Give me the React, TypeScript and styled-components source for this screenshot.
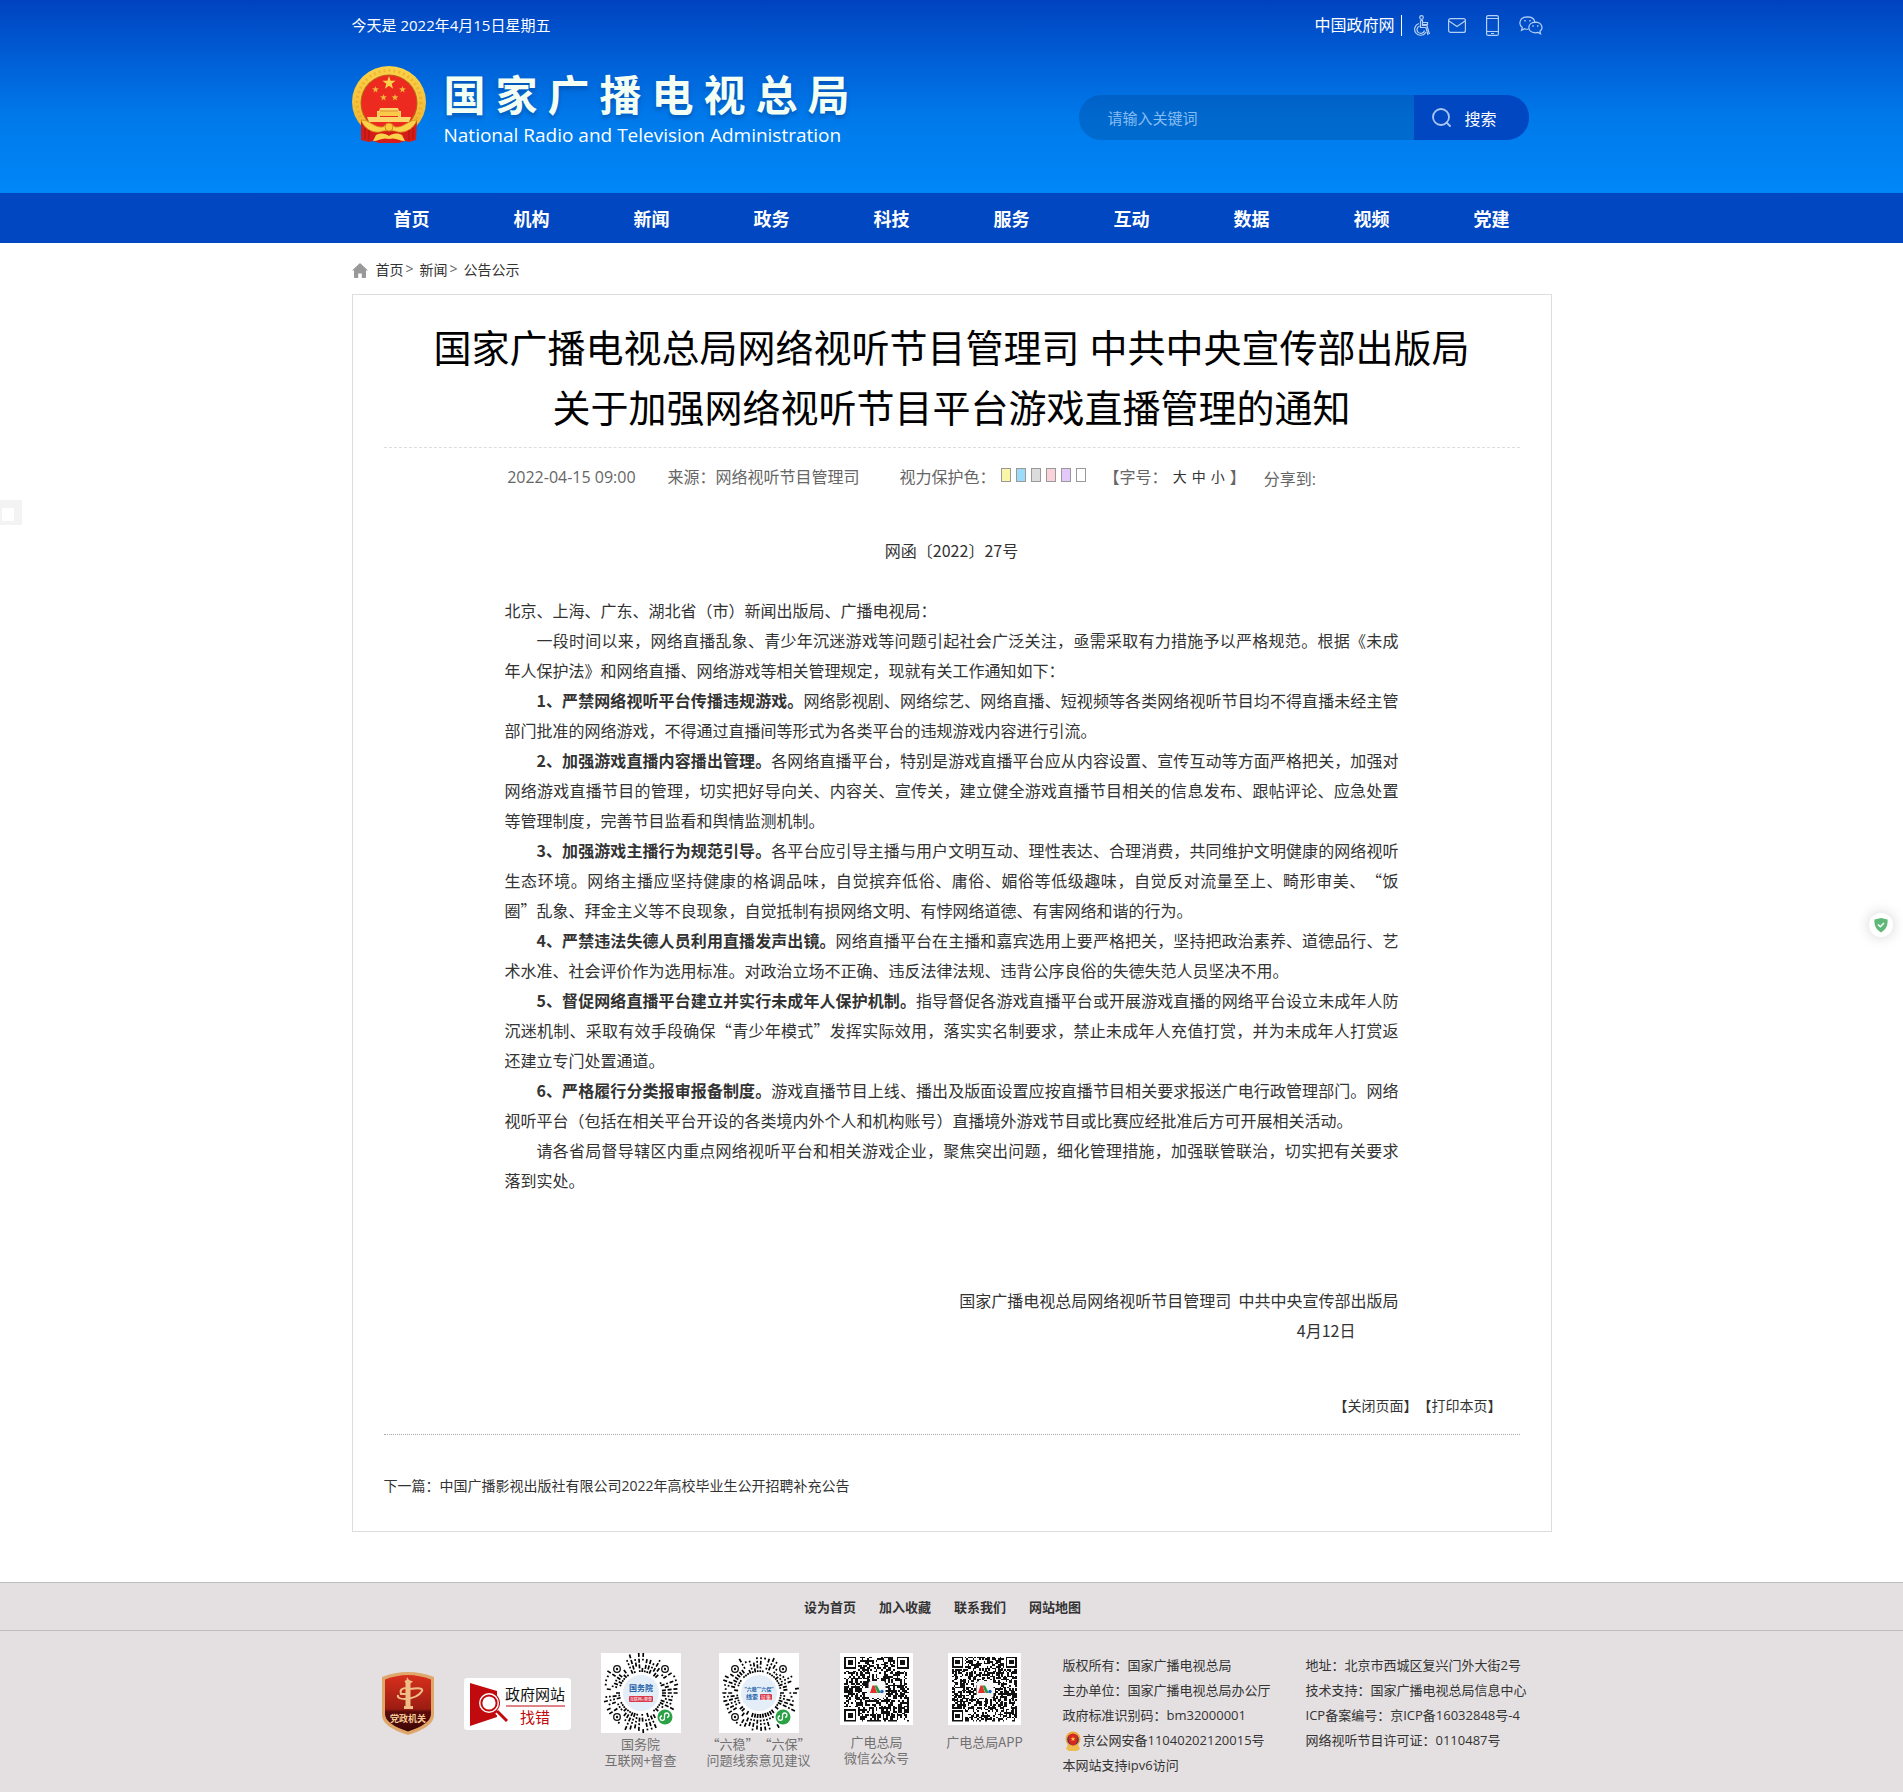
import React from "react";
import styled, { createGlobalStyle } from "styled-components";

const sans = `"Open Sans", "Noto Sans CJK SC", sans-serif`;
const cjk = `"Noto Sans CJK SC", "Open Sans", sans-serif`;

const GlobalStyle = createGlobalStyle`
  * { box-sizing: border-box; }
  body { margin: 0; background: #fff; color: #333; font-family: ${sans}; font-size: 14px; text-spacing-trim: space-all; }
  a { color: inherit; text-decoration: none; }
  p, h1, ul, dl { margin: 0; padding: 0; }
  button { border: 0; padding: 0; background: none; color: inherit; font: inherit; cursor: pointer; }
`;

const Container = styled.div`
  width: 100%;
  max-width: 1200px;
  margin: 0 auto;
`;

/* ---------- header ---------- */

const Header = styled.header`
  background: linear-gradient(#0042bf 0%, #005fd6 31%, #0079ea 60%, #0087f8 100%);
  color: #fff;
`;

const TopBar = styled(Container)`
  display: flex;
  justify-content: space-between;
  align-items: center;
  height: 52px;
  font-size: 15px;
`;

const Today = styled.span`
  padding-bottom: 4px;
`;

const TopLinks = styled.div`
  display: flex;
  align-items: center;
  padding: 0 9px 2px 0;
  color: #b5d0f4;
`;

const GovLink = styled.a`
  padding-right: 6px;
  border-right: 1px solid #fff;
  color: #fff;
  font-size: 16px;
  line-height: 21px;
`;

const IconLink = styled.a<{ $gap: number }>`
  display: flex;
  margin-left: ${(p) => p.$gap}px;
`;

const Masthead = styled(Container)`
  display: flex;
  justify-content: space-between;
  align-items: flex-end;
  padding: 14px 23px 50px 0;
`;

const Brand = styled.a`
  display: flex;
  gap: 18px;
  height: 77px;
`;

const BrandNames = styled.div`
  width: 406px;
  padding-top: 2px;
`;

const BrandZh = styled.div`
  font-family: ${cjk};
  font-size: 42px;
  font-weight: 700;
  line-height: 50px;
  text-align: justify;
  text-align-last: justify;
  color: #f4fff4;
  text-shadow: 0 3px 4px rgba(0, 50, 120, 0.4);
`;

const BrandEn = styled.div`
  margin-top: 6px;
  font-family: "Open Sans", sans-serif;
  font-size: 19px;
  line-height: 22px;
  white-space: nowrap;
`;

const SearchForm = styled.form`
  display: flex;
  width: 450px;
  height: 45px;
  margin-bottom: 3px;
  border-radius: 22px;
  overflow: hidden;
`;

const SearchInput = styled.input`
  flex: 1;
  min-width: 0;
  padding: 0 29px;
  border: 0;
  outline: 0;
  background: rgba(0, 60, 130, 0.28);
  color: #fff;
  font: 15px ${sans};
  &::placeholder { color: #86bcf2; opacity: 1; }
`;

const SearchButton = styled.button`
  display: flex;
  align-items: center;
  gap: 14px;
  width: 115px;
  padding-left: 18px;
  background: #0047c1;
  font-size: 16px;
`;

const Nav = styled.nav`
  background: #0047c1;
`;

const NavList = styled(Container).attrs({ as: "ul" })`
  display: grid;
  grid-template-columns: repeat(10, 1fr);
  list-style: none;
  a {
    display: block;
    padding-top: 2px;
    color: #fff;
    font-size: 18px;
    font-weight: 700;
    line-height: 48px;
    text-align: center;
  }
`;

/* ---------- article ---------- */

const Breadcrumb = styled(Container).attrs({ as: "nav" })`
  display: flex;
  align-items: center;
  height: 51px;
  svg { margin: 3px 8px 0 0; }
  span { margin: 0 6px 0 2px; color: #666; }
`;

const Panel = styled(Container).attrs({ as: "main" })`
  padding: 22px 31px 30px;
  border: 1px solid #ddd;
`;

const Title = styled.h1`
  padding-bottom: 10px;
  border-bottom: 1px dashed #ddd;
  color: #000;
  font-size: 38px;
  font-weight: 400;
  line-height: 60px;
  text-align: center;
`;

const Meta = styled.div`
  display: flex;
  justify-content: center;
  align-items: center;
  height: 30px;
  margin-top: 14px;
  padding-right: 80px;
  color: #666;
  font-size: 16px;
  line-height: 30px;
  white-space: nowrap;
`;

const MetaItem = styled.span<{ $gap: number }>`
  display: flex;
  align-items: center;
  margin-left: ${(p) => p.$gap}px;
`;

const Swatches = styled.span`
  display: flex;
  gap: 5px;
  padding: 0 18px 4px 5px;
`;

const Swatch = styled.button<{ $color: string }>`
  width: 10px;
  height: 14px;
  border: 1px solid #999;
  background: ${(p) => p.$color};
`;

const Sizes = styled.span`
  display: flex;
  gap: 5px;
  padding: 0 5px;
  color: #333;
  font-size: 14px;
`;

const Share = styled(MetaItem)`
  padding-top: 4px;
`;

const Article = styled.article`
  margin-top: 43px;
  padding: 0 121px;
  font-family: ${cjk};
  font-size: 16px;
  line-height: 30px;
`;

const Centered = styled.p`
  margin-bottom: 30px;
  text-align: center;
`;

const Paragraph = styled.p`
  text-align: justify;
  text-indent: 32px;
`;

const Signature = styled.div`
  margin-top: 90px;
  text-align: right;
`;

const SignDate = styled.p`
  padding-right: 43px;
`;

const Actions = styled.div`
  display: flex;
  justify-content: flex-end;
  margin-top: 46px;
  padding: 0 18px 14px 0;
  border-bottom: 1px dotted #aaa;
  line-height: 29px;
`;

const NextPost = styled.p`
  margin-top: 36px;
  line-height: 30px;
`;

/* ---------- footer ---------- */

const Footer = styled.footer`
  margin-top: 50px;
  border-top: 1px solid #bebdbf;
  background: #e4e0e1;
`;

const FooterLinks = styled.nav`
  display: flex;
  justify-content: center;
  gap: 23px;
  padding: 1px 18px 0 0;
  border-bottom: 1px solid #bebdbf;
  font-size: 13px;
  font-weight: 700;
  line-height: 46px;
`;

const FooterBody = styled(Container)`
  display: flex;
  gap: 30px;
  padding: 22px 0 14px 30px;
`;

const FooterMark = styled.a<{ $top: number }>`
  flex: none;
  height: 64px;
  margin-top: ${(p) => p.$top}px;
`;

const CodeItem = styled.figure<{ $width: number }>`
  display: flex;
  flex-direction: column;
  align-items: center;
  flex: none;
  width: ${(p) => p.$width}px;
  margin: 0;
  svg { flex: none; }
`;

const Caption = styled.figcaption<{ $top: number }>`
  margin-top: ${(p) => p.$top}px;
  color: #717071;
  font-family: ${cjk};
  font-size: 13px;
  line-height: 16px;
  text-align: center;
  white-space: nowrap;
`;

const Info = styled.div`
  display: grid;
  grid-template-columns: 243px auto;
  padding-left: 10px;
  font-size: 13px;
  line-height: 25px;
  white-space: nowrap;
`;

const InfoLine = styled.p`
  display: flex;
  align-items: center;
  gap: 1px;
`;

const SideTab = styled.div`
  position: fixed;
  left: 0;
  top: 500px;
  width: 22px;
  height: 25px;
  border: solid #f3f3f3;
  border-width: 8px 8px 4px 2px;
  background: #fff;
`;

const ShieldBubble = styled.button`
  position: fixed;
  right: 10px;
  top: 913px;
  display: flex;
  justify-content: center;
  align-items: center;
  width: 24px;
  height: 24px;
  border-radius: 50%;
  background: #fff;
  box-shadow: 0 0 14px rgba(0, 0, 0, 0.18);
`;

/* ---------- drawings ---------- */

function starPoints(cx: number, cy: number, r: number) {
  return Array.from({ length: 10 }, (_, i) => {
    const a = (Math.PI / 5) * i - Math.PI / 2;
    const q = i % 2 ? r * 0.4 : r;
    return `${(cx + q * Math.cos(a)).toFixed(2)},${(cy + q * Math.sin(a)).toFixed(2)}`;
  }).join(" ");
}

function Emblem() {
  return (
    <svg width="74" height="77" viewBox="0 0 74 77" aria-hidden="true">
      <defs>
        <linearGradient id="gold" x1="0" y1="0" x2="0" y2="1">
          <stop offset="0" stopColor="#fbd34a" />
          <stop offset="1" stopColor="#f0b02c" />
        </linearGradient>
      </defs>
      <ellipse cx="37" cy="36" rx="37" ry="36" fill="url(#gold)" />
      <circle cx="37" cy="36.500" r="32" fill="none" stroke="#e39a20" strokeWidth="3" strokeDasharray="2 3" opacity=".45" />
      <path d="M9 54c5 6 11 9 20 9h16c9 0 15-3 20-9l-1 20-7 2-4-1-6 2H27l-6-2-4 1-8-2z" fill="#d61c18" />
      <circle cx="37" cy="37" r="28.500" fill="#b9641a" />
      <circle cx="37" cy="37" r="27.500" fill="#ec2a20" />
      <polygon points={starPoints(37, 17, 7)} fill="#fbd34a" />
      {[[23.5, 23.5], [50.5, 23.5], [31.5, 31.5], [43, 31.5]].map(([x, y]) => (
        <polygon key={x} points={starPoints(x, y, 3.6)} fill="#f0b83c" />
      ))}
      <path d="M28 42h18l1 3h2v6h-3v-2H28v2h-3v-6h2z" fill="#fbd56a" />
      <path d="M28 45h18" stroke="#d8861a" />
      <path d="M26 46h22v4H26z" fill="#f9c94a" />
      <path d="M15 51h44l-2 5H17z" fill="#fbd56a" />
      <path d="M17 56h40l-6 6H23z" fill="#ec2a20" />
      <path d="M9 54c9 0 13 8 22 7 2-3 10-3 12 0 9 1 13-7 22-7-3 8-10 13-19 12-4-2-14-2-18 0-9 1-16-4-19-12z" fill="#fbd34a" stroke="#d8861a" strokeWidth=".8" />
      <circle cx="37" cy="61" r="4" fill="#fbc93a" stroke="#d8861a" />
      <path d="M21 75l3-6c6-3 10-1 13 1 3-2 7-4 13-1l3 6c-6 0-9-4-16-2-7-2-10 2-16 2z" fill="#fbd34a" />
      <path d="M13 62v11M17 64v10M57 64v10M61 62v11" stroke="#a8120f" />
    </svg>
  );
}

const stroke = { fill: "none", stroke: "currentColor", strokeWidth: 1.2 } as const;

const WheelchairIcon = () => (
  <svg width="17" height="21" viewBox="0 0 17 21" {...stroke}>
    <circle cx="7.500" cy="2.500" r="1.800" />
    <path d="M6.500 5.500h2v5h4.500l2.200 8H16M8.500 7.500h5v2h-5M6.500 5.500v7h5.500l2 7.500" />
    <path d="M5 8.500a6 6 0 1 0 7 8.500M5.500 11a3.800 3.800 0 1 0 5 4.500" />
  </svg>
);
const MailIcon = () => (
  <svg width="18" height="15" viewBox="0 0 18 15" {...stroke}>
    <rect x=".6" y=".6" width="16.800" height="13.800" rx="2" />
    <path d="M1 3l8 5.500L17 3" />
  </svg>
);
const PhoneIcon = () => (
  <svg width="13" height="21" viewBox="0 0 13 21" {...stroke}>
    <rect x=".6" y=".6" width="11.800" height="19.800" rx="1.500" />
    <path d="M1 3.500h11M1 16.500h11M5 18.500h3" />
  </svg>
);
const WechatIcon = () => (
  <svg width="24" height="19" viewBox="0 0 24 19" {...stroke}>
    <path d="M9.500 13.200c-1.600.2-2.600 0-3.800-.5L2.500 14.300l.8-2.800C-.8 8.600.2 1 8.500.8c4 0 6.700 2 7.300 5" />
    <path d="M16.300 6.200c-8.600.4-8.600 10.300 0 10.600 1 0 1.800-.1 2.600-.4l2.700 1.400-.7-2.500c4-3 2-9-4.600-9.100z" />
    <path d="M5.300 4.800h1.400M10.300 4.800h1.400M13.300 10h1.400M18 10h1.400" strokeWidth="1.500" />
  </svg>
);
const SearchIcon = () => (
  <svg width="19" height="19" viewBox="0 0 19 19" fill="none" stroke="#a9c6f2" strokeWidth="1.800">
    <circle cx="9" cy="9" r="8" />
    <path d="M14.500 14.500L18 18" strokeLinecap="round" />
  </svg>
);
const HomeIcon = () => (
  <svg width="16" height="15" viewBox="0 0 16 15" fill="#999">
    <path d="M8 0l8 7.500h-2V14c0 .6-.4 1-1 1H9.800v-4.500H6.200V15H3c-.6 0-1-.4-1-1V7.500H0z" />
  </svg>
);

function PartyBadge() {
  return (
    <svg width="52" height="64" viewBox="0 0 52 64">
      <defs>
        <linearGradient id="badgeRed" x1="0" y1="0" x2="0" y2="1">
          <stop offset="0" stopColor="#d8301c" />
          <stop offset=".6" stopColor="#9c1c12" />
          <stop offset=".65" stopColor="#5c0c0a" />
          <stop offset="1" stopColor="#3c0606" />
        </linearGradient>
      </defs>
      <path d="M0 6Q26-4 52 6v38q0 12-26 20Q0 56 0 44z" fill="#dfa76a" />
      <path d="M3 8.500Q26-.5 49 8.500V43q0 10-23 17.500Q3 53 3 43z" fill="url(#badgeRed)" />
      <path d="M23.500 12l-1-2 2-1 .5-3 2 3 4 1.500-2.500 2V36h-5V17z" fill="#efbd86" />
      <path d="M25 17q-8 0-6 6h6M28 18q14-2 12 2-4 7-17 8-8 0-7-4" fill="none" stroke="#efbd86" strokeWidth="2" />
      <path d="M22 35h9v3h-9z" fill="#efbd86" />
      <text x="26" y="51" textAnchor="middle" fontFamily="Noto Sans CJK SC" fontWeight="700" fontSize="9" fill="#f3c995">党政机关</text>
    </svg>
  );
}

function ErrorReport() {
  return (
    <svg width="107" height="52" viewBox="0 0 107 52">
      <rect width="107" height="52" rx="3" fill="#fff" />
      <path d="M6 5l27 8v26L6 48z" fill="#c00a0e" />
      <circle cx="25" cy="25" r="11" fill="#c00a0e" />
      <circle cx="25" cy="25" r="8.500" fill="#fff" stroke="#fff" strokeWidth="3" />
      <circle cx="25" cy="25" r="7.600" fill="#fff" stroke="#c00a0e" strokeWidth="2" />
      <path d="M33 34l9 9" stroke="#fff" strokeWidth="5" />
      <path d="M33 33l10 10" stroke="#c00a0e" strokeWidth="3" />
      <path d="M42 28h59" stroke="#c00a0e" />
      <text x="41" y="22" fontFamily="Noto Sans CJK SC" fontSize="15" fill="#111">政府网站</text>
      <text x="56" y="45" fontFamily="Noto Sans CJK SC" fontSize="15" fill="#c00a0e">找错</text>
    </svg>
  );
}

function makeRandom(seed: number) {
  let s = seed;
  return () => {
    s = (s * 1103515245 + 12345) % 2147483648;
    return s / 2147483648;
  };
}

/* Round mini-program code: rays of short dashes about a central disc. */
function RoundCode({ seed, children }: { seed: number; children: React.ReactNode }) {
  const rnd = makeRandom(seed);
  const eyes = [[16, 16], [64, 16], [16, 64]];
  let d = "";
  for (let k = 0; k < 54; k++) {
    const a = (k * Math.PI) / 27;
    for (let r = 21; r < 37; ) {
      const len = rnd() > 0.5 ? 4 : 1.8;
      const x = 40 + (r + len / 2) * Math.cos(a);
      const y = 40 + (r + len / 2) * Math.sin(a);
      const blocked = eyes.some(([ex, ey]) => Math.hypot(x - ex, y - ey) < 6) || Math.hypot(x - 64, y - 64) < 10;
      if (!blocked && rnd() > 0.18) {
        d += `M${(40 + r * Math.cos(a)).toFixed(1)} ${(40 + r * Math.sin(a)).toFixed(1)}L${(40 + (r + len) * Math.cos(a)).toFixed(1)} ${(40 + (r + len) * Math.sin(a)).toFixed(1)}`;
      }
      r += len + 1.8;
    }
  }
  return (
    <svg width="80" height="80" viewBox="0 0 80 80">
      <rect width="80" height="80" fill="#fff" />
      <path d={d} stroke="#000" strokeWidth="1.700" />
      {eyes.map(([x, y]) => (
        <g key={`${x}-${y}`}>
          <circle cx={x} cy={y} r="3.300" fill="#fff" stroke="#111" strokeWidth="1.300" />
          <circle cx={x} cy={y} r="1.200" fill="#111" />
        </g>
      ))}
      <circle cx="40" cy="40" r="18" fill="#e3eef8" />
      {children}
      <circle cx="64" cy="64" r="7.500" fill="#2aa245" />
      <path d="M61 63a2.200 2.200 0 1 0 2.500 2.200v-3a2.200 2.200 0 1 1 2.500 2.200" fill="none" stroke="#fff" strokeWidth="1.300" />
    </svg>
  );
}

/* Square code on a white card with the broadcaster's mark in the middle. */
function SquareCode({ seed, modules, inset }: { seed: number; modules: number; inset: number }) {
  const rnd = makeRandom(seed);
  const n = modules;
  const size = 73 - inset * 2;
  let d = "";
  for (let y = 0; y < n; y++) {
    for (let x = 0; x < n; x++) {
      const on = rnd() > 0.48;
      const corner = (x < 8 && y < 8) || (x >= n - 8 && y < 8) || (x < 8 && y >= n - 8);
      if (on && !corner) d += `M${x} ${y}h1v1h-1z`;
    }
  }
  const eye = (x: number, y: number) => `M${x} ${y}h7v7h-7zM${x + 1} ${y + 1}v5h5v-5zM${x + 2} ${y + 2}h3v3h-3z`;
  d += eye(0, 0) + eye(n - 7, 0) + eye(0, n - 7);
  return (
    <svg width="73" height="72" viewBox="0 0 73 72">
      <rect width="73" height="72" fill="#fff" />
      <svg x={inset} y={inset - 0.5} width={size} height={size} viewBox={`0 0 ${n} ${n}`}>
        <path d={d} fill="#111" shapeRendering="crispEdges" />
      </svg>
      <rect x="28.500" y="28" width="17" height="17" rx="3" fill="#f6f6f6" />
      <path d="M30 40l2.500-7.500h2L37 40z" fill="#e0312c" />
      <path d="M34.500 32.500h2.500L41 40h-3.500z" fill="#2a9a48" />
      <circle cx="42" cy="38.500" r="1.700" fill="#1f62c8" />
    </svg>
  );
}

const PoliceBadge = () => (
  <svg width="19" height="20" viewBox="-1 0 19 20">
    <path d="M4 13h10l2 5-3 2H5l-3-2z" fill="#eebb50" />
    <circle cx="9" cy="8" r="7.500" fill="#f0a83a" />
    <circle cx="9" cy="8.500" r="5.800" fill="#27347c" />
    <path d="M9 2.500l4.500 2v5Q13 13 9 14.500 5 13 4.500 9.500v-5z" fill="#d9271e" />
    <polygon points={starPoints(9, 8, 2.6)} fill="#fbd34a" />
  </svg>
);

/* ---------- content ---------- */

const navItems = ["首页", "机构", "新闻", "政务", "科技", "服务", "互动", "数据", "视频", "党建"];

const swatches = [
  ["黄色", "#faf6a8"],
  ["蓝色", "#9cdcf8"],
  ["灰色", "#dcdcdc"],
  ["粉色", "#fad2da"],
  ["紫色", "#e4c8fa"],
  ["白色", "#ffffff"],
];

const paragraphs: [string, string][] = [
  ["", "一段时间以来，网络直播乱象、青少年沉迷游戏等问题引起社会广泛关注，亟需采取有力措施予以严格规范。根据《未成年人保护法》和网络直播、网络游戏等相关管理规定，现就有关工作通知如下："],
  ["1、严禁网络视听平台传播违规游戏。", "网络影视剧、网络综艺、网络直播、短视频等各类网络视听节目均不得直播未经主管部门批准的网络游戏，不得通过直播间等形式为各类平台的违规游戏内容进行引流。"],
  ["2、加强游戏直播内容播出管理。", "各网络直播平台，特别是游戏直播平台应从内容设置、宣传互动等方面严格把关，加强对网络游戏直播节目的管理，切实把好导向关、内容关、宣传关，建立健全游戏直播节目相关的信息发布、跟帖评论、应急处置等管理制度，完善节目监看和舆情监测机制。"],
  ["3、加强游戏主播行为规范引导。", "各平台应引导主播与用户文明互动、理性表达、合理消费，共同维护文明健康的网络视听生态环境。网络主播应坚持健康的格调品味，自觉摈弃低俗、庸俗、媚俗等低级趣味，自觉反对流量至上、畸形审美、“饭圈”乱象、拜金主义等不良现象，自觉抵制有损网络文明、有悖网络道德、有害网络和谐的行为。"],
  ["4、严禁违法失德人员利用直播发声出镜。", "网络直播平台在主播和嘉宾选用上要严格把关，坚持把政治素养、道德品行、艺术水准、社会评价作为选用标准。对政治立场不正确、违反法律法规、违背公序良俗的失德失范人员坚决不用。"],
  ["5、督促网络直播平台建立并实行未成年人保护机制。", "指导督促各游戏直播平台或开展游戏直播的网络平台设立未成年人防沉迷机制、采取有效手段确保“青少年模式”发挥实际效用，落实实名制要求，禁止未成年人充值打赏，并为未成年人打赏返还建立专门处置通道。"],
  ["6、严格履行分类报审报备制度。", "游戏直播节目上线、播出及版面设置应按直播节目相关要求报送广电行政管理部门。网络视听平台（包括在相关平台开设的各类境内外个人和机构账号）直播境外游戏节目或比赛应经批准后方可开展相关活动。"],
  ["", "请各省局督导辖区内重点网络视听平台和相关游戏企业，聚焦突出问题，细化管理措施，加强联管联治，切实把有关要求落到实处。"],
];

export default function App() {
  return (
    <>
      <GlobalStyle />
      <Header>
        <TopBar>
          <Today>今天是 2022年4月15日星期五</Today>
          <TopLinks>
            <GovLink href="#">中国政府网</GovLink>
            <IconLink $gap={12} href="#" aria-label="无障碍"><WheelchairIcon /></IconLink>
            <IconLink $gap={17} href="#" aria-label="邮箱"><MailIcon /></IconLink>
            <IconLink $gap={20} href="#" aria-label="手机版"><PhoneIcon /></IconLink>
            <IconLink $gap={20} href="#" aria-label="微信"><WechatIcon /></IconLink>
          </TopLinks>
        </TopBar>
        <Masthead>
          <Brand href="#">
            <Emblem />
            <BrandNames>
              <BrandZh>国家广播电视总局</BrandZh>
              <BrandEn>National Radio and Television Administration</BrandEn>
            </BrandNames>
          </Brand>
          <SearchForm onSubmit={(e) => e.preventDefault()}>
            <SearchInput type="text" aria-label="搜索关键词" placeholder="请输入关键词" />
            <SearchButton type="submit"><SearchIcon />搜索</SearchButton>
          </SearchForm>
        </Masthead>
      </Header>
      <Nav>
        <NavList>
          {navItems.map((n) => <li key={n}><a href="#">{n}</a></li>)}
        </NavList>
      </Nav>

      <Breadcrumb>
        <HomeIcon />
        <a href="#">首页</a><span>&gt;</span>
        <a href="#">新闻</a><span>&gt;</span>
        <a href="#">公告公示</a>
      </Breadcrumb>

      <Panel>
        <Title>国家广播电视总局网络视听节目管理司 中共中央宣传部出版局<br />关于加强网络视听节目平台游戏直播管理的通知</Title>
        <Meta>
          <span>2022-04-15 09:00</span>
          <MetaItem $gap={32}>来源：网络视听节目管理司</MetaItem>
          <MetaItem $gap={40}>
            视力保护色：
            <Swatches>
              {swatches.map(([name, color]) => <Swatch key={name} type="button" aria-label={name} $color={color} />)}
            </Swatches>
          </MetaItem>
          <MetaItem $gap={0}>
            【字号：
            <Sizes>
              <button type="button">大</button>
              <button type="button">中</button>
              <button type="button">小</button>
            </Sizes>
            】
          </MetaItem>
          <Share $gap={18}>分享到:</Share>
        </Meta>

        <Article>
          <Centered>网函〔2022〕27号</Centered>
          <p>北京、上海、广东、湖北省（市）新闻出版局、广播电视局：</p>
          {paragraphs.map(([head, text]) => (
            <Paragraph key={text}>{head && <strong>{head}</strong>}{text}</Paragraph>
          ))}
          <Signature>
            <p>国家广播电视总局网络视听节目管理司&nbsp; 中共中央宣传部出版局</p>
            <SignDate>4月12日</SignDate>
          </Signature>
        </Article>

        <Actions>
          <button type="button">【关闭页面】</button>
          <button type="button">【打印本页】</button>
        </Actions>
        <NextPost>下一篇：<a href="#">中国广播影视出版社有限公司2022年高校毕业生公开招聘补充公告</a></NextPost>
      </Panel>

      <Footer>
        <FooterLinks>
          <a href="#">设为首页</a>
          <a href="#">加入收藏</a>
          <a href="#">联系我们</a>
          <a href="#">网站地图</a>
        </FooterLinks>
        <FooterBody>
          <FooterMark $top={18} href="#"><PartyBadge /></FooterMark>
          <FooterMark $top={25} href="#"><ErrorReport /></FooterMark>
          <CodeItem $width={80}>
            <RoundCode seed={7}>
              <text x="40" y="38" textAnchor="middle" fontFamily="Noto Sans CJK SC" fontWeight="700" fontSize="8" fill="#1d5fa8">国务院</text>
              <rect x="28" y="43" width="24" height="6" rx="1" fill="#d8384a" />
              <text x="40" y="48" textAnchor="middle" fontFamily="Noto Sans CJK SC" fontSize="4" fill="#fff">互联网+督查</text>
            </RoundCode>
            <Caption $top={3}>国务院<br />互联网+督查</Caption>
          </CodeItem>
          <CodeItem $width={96}>
            <RoundCode seed={23}>
              <text x="40" y="38" textAnchor="middle" fontFamily="Open Sans, Noto Sans CJK SC" fontWeight="700" fontSize="5" fill="#1d5fa8">“六稳”“六保”</text>
              <text x="27" y="46" fontFamily="Noto Sans CJK SC" fontWeight="700" fontSize="6" fill="#1d5fa8">线索</text>
              <rect x="41" y="41" width="12" height="6" rx="1" fill="#d8384a" />
              <text x="47" y="46" textAnchor="middle" fontFamily="Noto Sans CJK SC" fontSize="5" fill="#fff">征集</text>
            </RoundCode>
            <Caption $top={3}>“六稳”“六保”<br />问题线索意见建议</Caption>
          </CodeItem>
          <CodeItem $width={80}>
            <SquareCode seed={41} modules={37} inset={4} />
            <Caption $top={9}>广电总局<br />微信公众号</Caption>
          </CodeItem>
          <CodeItem $width={76}>
            <SquareCode seed={97} modules={41} inset={4} />
            <Caption $top={9}>广电总局APP</Caption>
          </CodeItem>
          <Info>
            <div>
              <p>版权所有：国家广播电视总局</p>
              <p>主办单位：国家广播电视总局办公厅</p>
              <p>政府标准识别码：bm32000001</p>
              <InfoLine><PoliceBadge /><a href="#">京公网安备11040202120015号</a></InfoLine>
              <p>本网站支持ipv6访问</p>
            </div>
            <div>
              <p>地址：北京市西城区复兴门外大街2号</p>
              <p>技术支持：国家广播电视总局信息中心</p>
              <p>ICP备案编号：<a href="#">京ICP备16032848号-4</a></p>
              <p>网络视听节目许可证：0110487号</p>
            </div>
          </Info>
        </FooterBody>
      </Footer>

      <SideTab />
      <ShieldBubble type="button" aria-label="安全防护">
        <svg width="14" height="15" viewBox="0 0 14 15">
          <path d="M7 0l6.500 1.500Q14.500 10 7 14.500-.5 10 .5 1.500z" fill="#5fb878" />
          <path d="M4 6.500l2.300 2.300L10 5" fill="none" stroke="#fff" strokeWidth="1.500" />
        </svg>
      </ShieldBubble>
    </>
  );
}
